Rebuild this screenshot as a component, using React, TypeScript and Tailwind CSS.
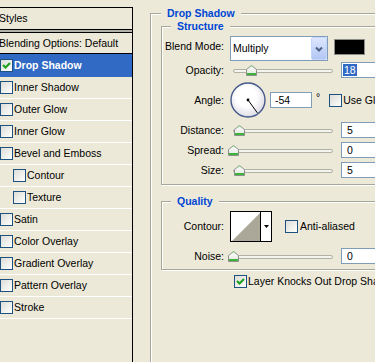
import React from "react";

interface StyleRow {
  name: string;
  checked?: boolean;
  active?: boolean;
  sub?: boolean;
}

const styleRows: StyleRow[] = [
  { name: "Drop Shadow", checked: true, active: true },
  { name: "Inner Shadow" },
  { name: "Outer Glow" },
  { name: "Inner Glow" },
  { name: "Bevel and Emboss" },
  { name: "Contour", sub: true },
  { name: "Texture", sub: true },
  { name: "Satin" },
  { name: "Color Overlay" },
  { name: "Gradient Overlay" },
  { name: "Pattern Overlay" },
  { name: "Stroke" },
];

const Check = ({ checked = false }: { checked?: boolean }) => (
  <span className="flex h-[13px] w-[13px] shrink-0 items-center justify-center border border-[#1c5180] bg-gradient-to-br from-[#dcdcd7] to-white">
    {checked && (
      <svg width="11" height="11" viewBox="0 0 11 11">
        <path d="M2 5 L4.5 7.5 L9 3" stroke="#21a121" strokeWidth="2.2" fill="none" />
      </svg>
    )}
  </span>
);

// slider: pos is the thumb offset in px from the start of the track
const Slider = ({ pos }: { pos: number }) => (
  <div className="relative h-[16px] w-[106px] shrink-0">
    <div className="absolute left-[3px] right-[3px] top-[7px] h-[4px] rounded-full border border-[#b2b1a5] bg-[#f4f4ef]" />
    <svg
      className="absolute top-[3px]"
      style={{ left: pos - 2 }}
      width="11"
      height="11"
      viewBox="0 0 11 11"
    >
      <defs>
        <linearGradient id="thumb" x1="0" y1="0" x2="0" y2="1">
          <stop offset="0" stopColor="#ffffff" />
          <stop offset="1" stopColor="#e2e2dc" />
        </linearGradient>
      </defs>
      <path d="M0.5 10.5 V4.5 L5.5 0.5 L10.5 4.5 V10.5 Z" fill="url(#thumb)" stroke="#8c8f8c" />
      <rect x="1" y="8" width="9" height="2" fill="#3cb43c" />
      <path d="M4 2 L5.5 1 L7 2" stroke="#7ccf7c" fill="none" />
    </svg>
  </div>
);

const Field = ({ children, pl = "pl-[5px]" }: { children: React.ReactNode; pl?: string }) => (
  <div className={`flex h-[16px] w-[42px] shrink-0 items-center border border-[#7f9db9] bg-white ${pl}`}>
    {children}
  </div>
);

const Label = ({ children }: { children: React.ReactNode }) => (
  <span className="w-[62px] shrink-0 text-right">{children}</span>
);

const SliderRow = ({ label, pos, value, className = "" }: { label: string; pos: number; value: React.ReactNode; className?: string }) => (
  <div className={`flex h-[16px] items-center gap-[6px] ${className}`}>
    <Label>{label}</Label>
    <Slider pos={pos} />
    <div className="-ml-[1px]">{value}</div>
  </div>
);

const Dial = () => (
  <svg width="36" height="36" viewBox="0 0 36 36" className="shrink-0">
    <defs>
      <radialGradient id="dial" cx="0.45" cy="0.4" r="0.6">
        <stop offset="0.5" stopColor="#ffffff" />
        <stop offset="1" stopColor="#dcdce4" />
      </radialGradient>
    </defs>
    <circle cx="18" cy="18" r="17" fill="url(#dial)" stroke="#46598a" strokeWidth="1.4" />
    <circle cx="18" cy="18" r="1.4" fill="#000" />
    <line x1="18" y1="18" x2="27.4" y2="30.9" stroke="#000" strokeWidth="1" />
  </svg>
);

const legendCls = "ml-[9px] bg-[#ece9d8] px-[6px] font-bold leading-[13px] text-[#0046d5]";
const groupCls = "m-0 min-w-0 border border-[#a7a69b] shadow-[inset_1px_1px_0_#fff,1px_1px_0_#fff]";

export default function App() {
  return (
    <div className="flex h-[362px] w-[375px] overflow-hidden bg-[#ece9d8] font-['Liberation_Sans',Arial,sans-serif] text-[10.5px] leading-[13px] text-black">
      {/* styles list */}
      <div className="w-[133px] shrink-0 pt-[7px]">
        <div className="h-full border-r border-t border-black">
          <div className="flex h-[22px] items-center border-b border-black">
            <span className="-ml-[1px]">Styles</span>
          </div>
          <div className="h-[2px] bg-[#b4b3a8]" />
          <div className="border-t border-black">
            <div className="flex h-[21px] items-center border-b border-black">
              <span className="-ml-[1px]">Blending Options: Default</span>
            </div>
            {styleRows.map((row) => (
              <div
                key={row.name}
                className={
                  row.active
                    ? "flex h-[23px] items-center gap-[1px] bg-[#316ac5] font-bold text-white"
                    : `flex h-[22px] items-center gap-[1px] border-b border-white ${row.sub ? "pl-[13px]" : ""}`
                }
              >
                <Check checked={row.checked} />
                <span>{row.name}</span>
              </div>
            ))}
          </div>
        </div>
      </div>

      {/* settings */}
      <div className="min-w-0 flex-1 pl-[17px] pt-[7px]">
        <fieldset className={`${groupCls} w-[250px] pb-[120px] pl-[10px] pr-[10px]`}>
          <legend className={`${legendCls} !ml-0`}>Drop Shadow</legend>

          <fieldset className={`${groupCls} pb-[6px] pt-[3px]`}>
            <legend className={legendCls}>Structure</legend>

            <div className="flex h-[25px] items-start gap-[6px]">
              <span className="mt-[4px] w-[62px] shrink-0 text-right">Blend Mode:</span>
              <div className="flex h-[25px] w-[98px] shrink-0 items-center border border-[#7f9db9] bg-white">
                <span className="flex-1 pl-[2px]">Multiply</span>
                <span className="flex h-full w-[16px] items-center justify-center rounded-[2px] border border-[#c6d5fb] bg-gradient-to-b from-[#dde7fe] to-[#b2c6f4]">
                  <svg width="8" height="6" viewBox="0 0 8 6">
                    <path d="M1 1.5 L4 4.5 L7 1.5" stroke="#4d6185" strokeWidth="2" fill="none" />
                  </svg>
                </span>
              </div>
              <span className="mt-[3px] h-[16px] w-[31px] shrink-0 border border-[#8c8c88] bg-black" />
            </div>

            <SliderRow
              className="mt-[1px]"
              label="Opacity:"
              pos={18}
              value={
                <Field pl="pl-[1px]">
                  <span className="bg-[#316ac5] px-[1px] leading-[12px] text-white">18</span>
                </Field>
              }
            />

            <div className="mt-[4px] flex h-[36px] items-center gap-[6px]">
              <Label>Angle:</Label>
              <Dial />
              <div className="-ml-[2px]">
                <Field pl="pl-[4px]">-54</Field>
              </div>
              <span className="-ml-[2px] self-start pt-[9px]">°</span>
              <div className="ml-[3px] flex items-center gap-[1px]">
                <Check />
                <span className="whitespace-nowrap">Use Global Light</span>
              </div>
            </div>

            <SliderRow className="mt-[4px]" label="Distance:" pos={6} value={<Field>5</Field>} />
            <SliderRow className="mt-[4px]" label="Spread:" pos={0} value={<Field>0</Field>} />
            <SliderRow className="mt-[4px]" label="Size:" pos={6} value={<Field>5</Field>} />
          </fieldset>

          <fieldset className={`${groupCls} mt-[10px] pb-[5px] pt-[3px]`}>
            <legend className={legendCls}>Quality</legend>

            <div className="flex h-[31px] items-center gap-[6px]">
              <Label>Contour:</Label>
              <div className="flex h-[31px] w-[42px] shrink-0 border border-black bg-white">
                <svg width="29" height="29" viewBox="0 0 29 29" className="shrink-0">
                  <polygon points="1,29 29,1 29,29" fill="#aca899" />
                </svg>
                <div className="flex flex-1 items-center justify-center border-l border-black">
                  <svg width="5" height="3" viewBox="0 0 5 3">
                    <polygon points="0,0 5,0 2.5,3" fill="#000" />
                  </svg>
                </div>
              </div>
              <div className="ml-[7px] flex items-center gap-[2px]">
                <Check />
                <span>Anti-aliased</span>
              </div>
            </div>

            <SliderRow className="mt-[6px]" label="Noise:" pos={0} value={<Field>0</Field>} />
          </fieldset>

          <div className="ml-[73px] mt-[4px] flex h-[14px] items-center gap-[1px] whitespace-nowrap">
            <Check checked />
            <span>Layer Knocks Out Drop Shadow</span>
          </div>
        </fieldset>
      </div>
    </div>
  );
}
